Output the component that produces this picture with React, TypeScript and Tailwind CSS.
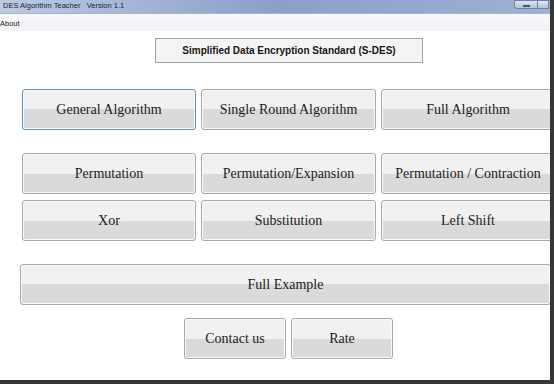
import React from "react";

function WinButton({
  label,
  className = "",
  focused = false,
}: {
  label: string;
  className?: string;
  focused?: boolean;
}) {
  return (
    <button
      type="button"
      className={`font-[Liberation_Serif] flex items-center justify-center rounded-[3px] border bg-linear-to-b from-[#f1f1f1] from-50% to-[#dadada] to-50% shadow-[inset_0_0_0_1px_#fafafa] text-[14px] text-[#1c1c1c] ${focused ? "border-[#5a94bf]" : "border-[#a9a9a9]"} ${className}`}
    >
      {label}
    </button>
  );
}

const topRow = ["General Algorithm", "Single Round Algorithm", "Full Algorithm"];
const midRow = ["Permutation", "Permutation/Expansion", "Permutation / Contraction"];
const lowRow = ["Xor", "Substitution", "Left Shift"];

function ButtonRow({ labels, focusFirst = false }: { labels: string[]; focusFirst?: boolean }) {
  return (
    <div className="ml-[22px] flex gap-[5px]">
      <WinButton label={labels[0]} focused={focusFirst} className="w-[174px] h-[41px] shrink-0" />
      <WinButton label={labels[1]} className="w-[175px] h-[41px] shrink-0" />
      {/* last column runs under the window frame */}
      <WinButton label={labels[2]} className="w-[182px] h-[41px] shrink-0 pr-[8px]" />
    </div>
  );
}

export default function App() {
  return (
    <div className="font-[Liberation_Serif] w-[554px] h-[384px] overflow-hidden bg-white border-r-[4px] border-b-[4px] border-[#363636] flex flex-col">
      {/* title bar */}
      <div className="h-[14px] shrink-0 flex items-start justify-between bg-linear-to-r from-[#bccae3] via-[#8c9fca] to-[#9eb0d4] border-b border-[#a7b3c9]">
        <span className="font-[Liberation_Sans] pl-[3px] text-[7.5px] leading-[12px] text-[#1d2433] whitespace-pre">
          DES Algorithm Teacher   Version 1.1
        </span>
        <div className="flex h-[9px] mr-[1px]">
          <div className="w-[24px] h-[9px] rounded-bl-[3px] border border-[#6f7f9e] bg-linear-to-b from-[#dfe6f2] to-[#b4c1d9] flex items-center justify-center">
            <div className="w-[7px] h-[2px] bg-white border border-[#4a5670] mt-[2px]" />
          </div>
          <div className="w-[11px] h-[9px] border border-l-0 border-[#6f7f9e] bg-linear-to-b from-[#dfe6f2] to-[#b4c1d9]" />
        </div>
      </div>

      {/* menu bar */}
      <div className="h-[17px] shrink-0 flex items-center bg-linear-to-b from-[#f7f8fa] to-[#eff1f4]">
        <span className="font-[Liberation_Sans] text-[7.5px] text-[#1e1e1e] mt-[3px]">About</span>
      </div>

      {/* body */}
      <div className="flex-1 flex flex-col">
        <div className="font-[Liberation_Sans] mt-[7px] ml-[155px] w-[268px] h-[25px] border border-[#a3a3a3] bg-[#f4f4f4] flex items-center justify-center text-[10px] font-bold text-[#151515]">
          Simplified Data Encryption Standard (S-DES)
        </div>

        <div className="mt-[26px]">
          <ButtonRow labels={topRow} focusFirst />
        </div>
        <div className="mt-[23px]">
          <ButtonRow labels={midRow} />
        </div>
        <div className="mt-[6px]">
          <ButtonRow labels={lowRow} />
        </div>

        <WinButton label="Full Example" className="mt-[23px] ml-[20px] w-[531px] h-[41px] shrink-0" />

        <div className="mt-[13px] ml-[184px] flex gap-[5px]">
          <WinButton label="Contact us" className="w-[102px] h-[41px]" />
          <WinButton label="Rate" className="w-[102px] h-[41px]" />
        </div>
      </div>
    </div>
  );
}
